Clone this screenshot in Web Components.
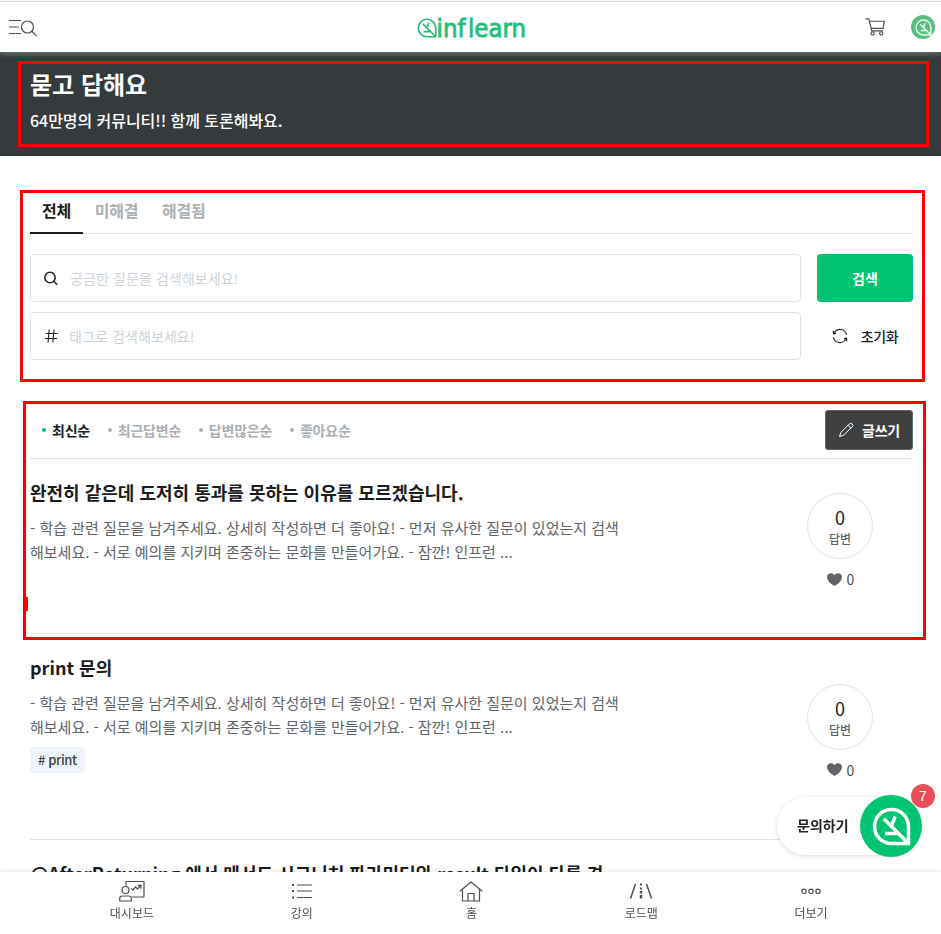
<!DOCTYPE html>
<html lang="ko">
<head>
<meta charset="utf-8">
<title>묻고 답해요</title>
<style>
body{margin:0;background:#fff;font-family:"Noto Sans CJK KR",sans-serif;color:#1b1c1d}
</style>
</head>
<body>
<community-page></community-page>
<script>
const define=(name,html)=>{
  const t=document.createElement('template');t.innerHTML=html;
  customElements.define(name,class extends HTMLElement{
    constructor(){super();this.attachShadow({mode:'open'}).append(t.content.cloneNode(true));}
  });
};

define('leaf-mark',`<style>:host{display:inline-block;line-height:0}svg{width:100%;height:100%;fill:none;stroke:currentColor;stroke-width:var(--stroke,2.8)}</style>
<svg viewBox="0 0 28 28"><path d="M26.200 26.200H14A12.200 12.200 0 1 1 26.200 14Z"/><path d="M25.500 25.500 8.500 8.500M14 13.500 16.600 6.800M9.300 19H18.500"/></svg>`);

define('site-header',`<style>
:host{display:block;position:relative;z-index:1;height:52px;box-sizing:border-box;padding-top:1px;background:#fff;box-shadow:0 1px 6px rgba(255,255,255,.35)}
.bar{border-top:1px solid #dedede;height:50px;display:grid;grid-template-columns:1fr 108px 1fr;align-items:center}
svg{display:block;fill:none;stroke:#495057;stroke-width:1.2}
.menu{margin-left:9px;margin-top:1px}
.right{display:flex;justify-content:flex-end;align-items:center;gap:25px;padding-right:6px}
.avatar{width:24px;height:24px;border-radius:50%;background:#58bf7e;display:flex;align-items:center;justify-content:center;color:#eafaf0}
.avatar leaf-mark{width:17px;height:17px;--stroke:2.4}
.logo{display:flex;color:#1dc078;align-items:center}
.logo leaf-mark{width:20px;height:20px;--stroke:2.3;margin-top:1px}
.logo svg{stroke:#1dc078;stroke-width:.8;fill:#1dc078;overflow:visible}
</style>
<div class="bar">
<svg class="menu" width="29" height="20" viewBox="0 0 29 20"><path d="M0 2.500h12M0 9h10M0 15.500h12"/><circle cx="18.500" cy="9" r="6"/><path d="m22.700 13.200 5 5"/></svg>
<div class="logo"><leaf-mark></leaf-mark><svg width="88" height="26"><g font-family="DejaVu Sans" font-size="24"><text x="-.5" y="22.500" textLength="29" lengthAdjust="spacingAndGlyphs">inf</text><text x="31" y="22.500" textLength="58" lengthAdjust="spacingAndGlyphs">learn</text></g></svg></div>
<div class="right">
<svg width="21" height="20" viewBox="0 0 22 20"><path d="M.5 1.500H4L7 14h12M4.500 4h15.700L19 11.500H6.500"/><circle cx="8" cy="16.700" r="1.700"/><circle cx="17" cy="16.700" r="1.700"/></svg>
<div class="avatar"><leaf-mark></leaf-mark></div></div>
</div>`);

define('page-hero',`<style>
:host{display:block;height:104px;box-sizing:border-box;background:#353b3d;color:#fff;padding:14px 30px 0}
h1{margin:0;font-size:24px;line-height:36px;font-weight:700}
p{margin:6px 0 0;font-size:16px;line-height:24px;font-weight:500;letter-spacing:-.05px}
</style><h1><slot name="title"></slot></h1><p><slot></slot></p>`);

define('status-tabs',`<style>
:host{display:flex;height:46px;box-sizing:border-box;border-bottom:1px solid #dee2e6;font-size:16px;letter-spacing:-.3px;font-weight:700;line-height:24px}
::slotted(span){padding:10px 12px 0;color:#abb0b5;height:36px;font-weight:700}
::slotted(.on){color:#1b1c1d!important;border-bottom:2px solid #1b1c1d;height:34px!important}
</style><slot></slot>`);

define('search-field',`<style>
:host{display:flex;align-items:center;height:48px;box-sizing:border-box;border:1px solid #dee2e6;border-radius:4px;font-size:14px;letter-spacing:.1px;color:#ced4da;padding-left:13px;gap:var(--gap,12px);line-height:20px}
::slotted(svg){display:block;flex:none}
</style><slot name="icon"></slot><span><slot></slot></span>`);

define('search-panel',`<style>
:host{display:grid;grid-template-columns:1fr 96px;gap:10px 16px;padding-top:20px}
.go,.reset{display:flex;align-items:center;justify-content:center;font-size:14px;line-height:20px;font-weight:700}
.go{background:#00c471;color:#fff;border-radius:4px}
.reset{font-weight:500;gap:13px;letter-spacing:-.3px}
.go span,.reset span{margin-top:-1px}
svg{fill:none;stroke:#212529}
</style>
<search-field><svg slot="icon" width="14" height="16" viewBox="0 0 14 16" fill="none" stroke="#212529" stroke-width="1.500"><circle cx="6" cy="7.500" r="5.200"/><path d="m9.800 11.300 3.400 3.400"/></svg>궁금한 질문을 검색해보세요!</search-field>
<div class="go"><span>검색</span></div>
<search-field style="--gap:11px"><svg slot="icon" width="14" height="16" viewBox="0 0 14 16" fill="none" stroke="#343a40" stroke-width="1.100"><path d="M5.200 1.500 4 14.500M10 1.500 8.800 14.500M1.500 5.500h12M1 10.500h12"/></svg>태그로 검색해보세요!</search-field>
<div class="reset"><svg width="16" height="16" viewBox="0 0 16 16"><path stroke-width="1.100" d="M2.500 4.200A6.700 6.700 0 0 1 14.500 6.700M13.500 11.800A6.700 6.700 0 0 1 1.500 9.300"/><path fill="#212529" stroke="none" d="m.5 2.500.6 4.200 3.600-1.200ZM15.500 13.500l-.6-4.200-3.600 1.200Z"/></svg><span>초기화</span></div>`);

define('sort-bar',`<style>
:host{display:flex;align-items:center;justify-content:space-between;height:57px;box-sizing:border-box;border-bottom:1px solid #dee2e6}
.opts{display:flex;gap:17.700px;padding-left:12px;font-size:14px;line-height:20px;font-weight:700;color:#abb0b5;letter-spacing:-.2px}
.opts span{display:flex;align-items:center;gap:6px}
.opts span:before{content:"";width:4px;height:4px;border-radius:50%;background:#abb0b5}
.opts .on{color:#1b1c1d}.opts .on:before{background:#00c471}
.write{width:88px;height:40px;box-sizing:border-box;border:1px solid #5c666c;border-radius:3px;background:#3e4042;color:#fff;display:flex;align-items:center;justify-content:center;gap:8px;font-size:14px;line-height:20px;font-weight:700;letter-spacing:-.2px}
svg{fill:none;stroke:#fff;stroke-width:1}
</style>
<div class="opts"><span class="on">최신순</span><span>최근답변순</span><span>답변많은순</span><span>좋아요순</span></div>
<div class="write"><svg width="16" height="16" viewBox="0 0 16 16"><path d="M1.500 14.500 2.800 10.500 11.300 2Q12.800.7 14.200 2T14.200 4.800L5.600 13.200ZM10 3.300l2.800 2.800"/></svg>글쓰기</div>`);

define('question-item',`<style>
:host{display:flex;justify-content:space-between;box-sizing:border-box;height:175px;border-bottom:1px solid #e1e3e6}
:host([tall]){height:206px}
:host([bare]) .side{display:none}
.text{padding-top:19px;white-space:nowrap}
h2{margin:0;font-size:18px;line-height:28px;font-weight:700;letter-spacing:0}
p{margin:10px 0 7px;font-size:15px;line-height:24px;color:#616568}
::slotted([slot=tag]){display:inline-block;background:#eff4fc;border-radius:4px;height:26px;padding:0 8px;font-size:13px;font-weight:500;line-height:26px;color:#3e4042;letter-spacing:-.4px}
.side{width:146px;display:flex;flex-direction:column;align-items:center;justify-content:center}
.ring{width:66px;height:66px;box-sizing:border-box;border:1px solid #dee2e6;border-radius:50%;text-align:center;padding-top:10px}
.num{font-size:18px;line-height:26px}
.lab{font-size:12px;line-height:18px;color:#616568;font-weight:500}
.like{height:40px;display:flex;align-items:center;gap:5px;font-size:14px;color:#495057;padding-left:1px}
svg{fill:#616568}
</style>
<div class="text"><h2><slot name="title"></slot></h2><p><slot></slot></p><slot name="tag"></slot></div>
<div class="side"><div class="ring"><div class="num">0</div><div class="lab">답변</div></div>
<div class="like"><svg width="15" height="13" viewBox="0 0 15 13"><path d="M7.500 13Q0 8.500 0 4.200C0 .2 5.200-1.100 7.500 2.200 9.800-1.100 15 .2 15 4.200Q15 8.500 7.500 13Z"/></svg><span>0</span></div></div>`);

define('nav-item',`<style>
:host{display:flex;flex-direction:column;align-items:center;flex:1;font-size:12px;line-height:18px;color:#495057}
::slotted(svg){display:block;height:22px;fill:none;stroke:#495057;stroke-width:1.200;margin-bottom:2px}
</style><slot name="icon"></slot><span><slot></slot></span>`);

define('bottom-nav',`<style>
:host{position:fixed;left:0;right:0;bottom:0;height:62px;box-sizing:border-box;padding:8px 45px 0 47px;display:flex;background:#fff;box-shadow:0 0 5px rgba(0,0,0,.14)}
</style>
<nav-item><svg slot="icon" width="26" height="22" viewBox="0 0 26 22"><path d="M7 5.500V2q0-.5.500-.5h17q.5 0 .5.500v14.500q0 .5-.5.500H13"/><circle cx="6.500" cy="10" r="3.500"/><path d="M.7 21V18.500q0-2.500 2.500-2.500h6.600q2.500 0 2.500 2.500V21ZM12 8.500l2 1.500 2.500-3 2 2 3.500-3.500M18.500 5.300H22v3.500"/></svg>대시보드</nav-item>
<nav-item><svg slot="icon" width="22" height="22" viewBox="0 0 22 22"><path d="M6 5h15M6 11h15M6 17.500h15"/><path stroke-width="2" d="M1 5h2M1 11h2M1 17.500h2"/></svg>강의</nav-item>
<nav-item><svg slot="icon" width="24" height="22" viewBox="0 0 24 22"><path d="M.8 11.300 12 2l11.200 9.300M3.500 9.500V21h17V9.500M9 21v-7.500h6V21"/></svg>홈</nav-item>
<nav-item><svg slot="icon" width="24" height="22" viewBox="0 0 24 22"><path stroke-width="1.500" d="M6.500 4 1.500 18.500M17.500 4l5 14.500"/><path stroke-width="2" d="M12 3.500v2M12 7.500v2"/><path stroke-width="2.500" d="M12 11v2.500M12 15v3.500"/></svg>로드맵</nav-item>
<nav-item><svg slot="icon" width="22" height="22" viewBox="0 0 22 22"><circle cx="4" cy="11.300" r="2.200"/><circle cx="11" cy="11.300" r="2.200"/><circle cx="18" cy="11.300" r="2.200"/></svg>더보기</nav-item>`);

define('chat-launcher',`<style>
:host{position:fixed;left:777px;top:797px;width:145px;height:58px;box-sizing:border-box;border-radius:29px;background:#fff;box-shadow:0 1px 5px rgba(0,0,0,.14);display:flex;align-items:center;padding:0 0 2px 20px;font-size:14px;font-weight:700;color:#212529}
.btn{position:absolute;right:0;top:-2px;width:62px;height:62px;border-radius:50%;background:#00c471;color:#fff;display:flex;align-items:center;justify-content:center}
.btn leaf-mark{width:39px;height:39px;--stroke:2.500}
.badge{position:absolute;right:-13px;top:-13px;width:24px;height:24px;border-radius:50%;background:#e94f5b;color:#fff;font:400 14px/24px "Liberation Sans",sans-serif;text-align:center}
</style>문의하기<div class="btn"><leaf-mark></leaf-mark></div><div class="badge">7</div>`);

define('mark-frame',`<style>:host{position:absolute;box-sizing:border-box;border:3px solid #f00;pointer-events:none}
:host([notch]):after{content:"";position:absolute;left:-3px;top:193px;width:5px;height:14px;background:#f00}</style>`);

define('community-page',`<style>
:host{display:block;position:relative;height:934px;overflow:hidden}
main{padding:32px 28px 0 30px}
sort-bar{margin-top:42px}
</style>
<site-header></site-header>
<page-hero><span slot="title">묻고 답해요</span>64만명의 커뮤니티!! 함께 토론해봐요.</page-hero>
<main>
<status-tabs><span class="on">전체</span><span>미해결</span><span>해결됨</span></status-tabs>
<search-panel></search-panel>
<sort-bar></sort-bar>
<question-item><span slot="title">완전히 같은데 도저히 통과를 못하는 이유를 모르겠습니다.</span>- 학습 관련 질문을 남겨주세요. 상세히 작성하면 더 좋아요! - 먼저 유사한 질문이 있었는지 검색<br>해보세요. - 서로 예의를 지키며 존중하는 문화를 만들어가요. - 잠깐! 인프런 ...</question-item>
<question-item tall><span slot="title">print 문의</span>- 학습 관련 질문을 남겨주세요. 상세히 작성하면 더 좋아요! - 먼저 유사한 질문이 있었는지 검색<br>해보세요. - 서로 예의를 지키며 존중하는 문화를 만들어가요. - 잠깐! 인프런 ...<span slot="tag"># print</span></question-item>
<question-item bare><span slot="title">@AfterReturning 에서 메서드 시그니처 파라미터와 result 타입이 다를 경</span></question-item>
</main>
<mark-frame style="left:18px;top:61px;width:911px;height:86px"></mark-frame>
<mark-frame style="left:20px;top:190px;width:905px;height:192px"></mark-frame>
<mark-frame notch style="left:23px;top:401px;width:903px;height:239px"></mark-frame>
<bottom-nav></bottom-nav>
<chat-launcher></chat-launcher>`);
</script>
</body>
</html>
